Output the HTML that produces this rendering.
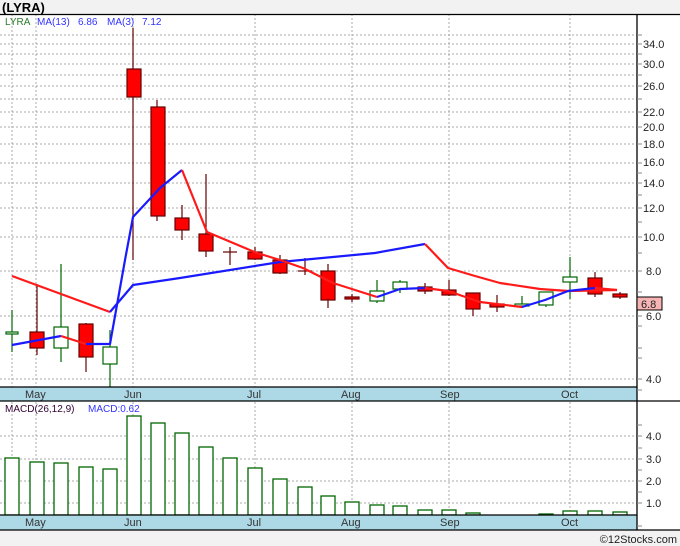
<!DOCTYPE html>
<html><head><meta charset="utf-8"><style>
html,body{margin:0;padding:0;background:#f2f2f2;}
svg{display:block;font-family:"Liberation Sans","DejaVu Sans",sans-serif;}
</style></head><body>
<svg width="680" height="546" viewBox="0 0 680 546" xmlns="http://www.w3.org/2000/svg">
<rect x="0" y="0" width="680" height="546" fill="#f2f2f2"/>
<text x="2" y="12" font-size="13" font-weight="bold" fill="#000">(LYRA)</text>
<rect x="0" y="14" width="680" height="516" fill="#fff"/>
<g stroke="#aaa" stroke-width="1" stroke-dasharray="2,2">
<line x1="0" y1="35" x2="637" y2="35"/><line x1="0" y1="44" x2="637" y2="44"/><line x1="0" y1="54" x2="637" y2="54"/><line x1="0" y1="64" x2="637" y2="64"/><line x1="0" y1="75" x2="637" y2="75"/><line x1="0" y1="86" x2="637" y2="86"/><line x1="0" y1="99" x2="637" y2="99"/><line x1="0" y1="112" x2="637" y2="112"/><line x1="0" y1="127" x2="637" y2="127"/><line x1="0" y1="144" x2="637" y2="144"/><line x1="0" y1="163" x2="637" y2="163"/><line x1="0" y1="183" x2="637" y2="183"/><line x1="0" y1="208" x2="637" y2="208"/><line x1="0" y1="237" x2="637" y2="237"/><line x1="0" y1="271" x2="637" y2="271"/><line x1="0" y1="316" x2="637" y2="316"/><line x1="0" y1="379" x2="637" y2="379"/>
<line x1="0" y1="436" x2="637" y2="436"/><line x1="0" y1="459" x2="637" y2="459"/><line x1="0" y1="481" x2="637" y2="481"/><line x1="0" y1="503" x2="637" y2="503"/>
<line x1="12" y1="14" x2="12" y2="515"/><line x1="36" y1="14" x2="36" y2="515"/><line x1="133" y1="14" x2="133" y2="515"/><line x1="255" y1="14" x2="255" y2="515"/><line x1="352" y1="14" x2="352" y2="515"/><line x1="449" y1="14" x2="449" y2="515"/><line x1="570" y1="14" x2="570" y2="515"/>
</g>
<text x="5" y="25" font-size="10" fill="#2a7a2a">LYRA</text>
<g font-size="10" fill="#3333ff">
<text x="37" y="25">MA(13)</text><text x="78" y="25">6.86</text><text x="107" y="25">MA(3)</text><text x="142" y="25">7.12</text>
</g>
<!-- candles -->
<g stroke-width="1.2">
<g stroke="#006600" fill="#fff">
<line x1="12" y1="310" x2="12" y2="352"/><rect x="6" y="332" width="12" height="2"/>
<line x1="61" y1="264" x2="61" y2="362"/><rect x="54" y="327" width="14" height="21"/>
<line x1="110" y1="330" x2="110" y2="388"/><rect x="103" y="347" width="14" height="17"/>
<line x1="377" y1="280" x2="377" y2="303"/><rect x="370" y="291" width="14" height="10"/>
<line x1="400" y1="280" x2="400" y2="293"/><rect x="393" y="282" width="14" height="7"/>
<line x1="522" y1="296" x2="522" y2="308"/><rect x="515" y="304" width="14" height="2"/>
<line x1="546" y1="292" x2="546" y2="307"/><rect x="539" y="292" width="14" height="13"/>
<line x1="570" y1="257" x2="570" y2="299"/><rect x="563" y="277" width="14" height="5"/>
</g>
<g stroke="#660000" fill="#ff0000">
<line x1="37" y1="284" x2="37" y2="355"/><rect x="30" y="332" width="14" height="16"/>
<line x1="86" y1="323" x2="86" y2="372"/><rect x="79" y="324" width="14" height="33"/>
<line x1="133" y1="28" x2="133" y2="260"/><rect x="127" y="69" width="14" height="28"/>
<line x1="157" y1="100" x2="157" y2="221"/><rect x="151" y="107" width="14" height="109"/>
<line x1="182" y1="205" x2="182" y2="240"/><rect x="175" y="218" width="14" height="12"/>
<line x1="206" y1="174" x2="206" y2="257"/><rect x="199" y="234" width="14" height="17"/>
<line x1="230" y1="247" x2="230" y2="265"/><line x1="223" y1="252" x2="237" y2="252"/>
<line x1="255" y1="247" x2="255" y2="260"/><rect x="248" y="252" width="14" height="7"/>
<line x1="280" y1="255" x2="280" y2="274"/><rect x="273" y="260" width="14" height="13"/>
<line x1="305" y1="258" x2="305" y2="275"/><line x1="298" y1="271" x2="312" y2="271"/>
<line x1="328" y1="264" x2="328" y2="308"/><rect x="321" y="271" width="14" height="29"/>
<line x1="352" y1="294" x2="352" y2="302"/><rect x="345" y="297" width="14" height="2"/>
<line x1="425" y1="283" x2="425" y2="294"/><rect x="418" y="287" width="14" height="4"/>
<line x1="449" y1="280" x2="449" y2="296"/><rect x="442" y="290" width="14" height="5"/>
<line x1="473" y1="293" x2="473" y2="316"/><rect x="466" y="293" width="14" height="16"/>
<line x1="497" y1="295" x2="497" y2="312"/><rect x="490" y="304" width="14" height="3"/>
<line x1="595" y1="272" x2="595" y2="297"/><rect x="588" y="278" width="14" height="16"/>
<line x1="620" y1="292" x2="620" y2="299"/><rect x="613" y="294" width="14" height="3"/>
</g>
</g>
<!-- MA lines -->
<g fill="none" stroke-width="2.2" stroke-linejoin="round">
<polyline stroke="#ff1a1a" points="12,276 110,312"/>
<polyline stroke="#1a1aff" points="110,312 133,285 180,278 280,262 375,253 425,244"/>
<polyline stroke="#ff1a1a" points="425,244 448,268 475,276 500,283 540,289 568,291 617,290"/>
<polyline stroke="#1a1aff" points="12,345 61,336"/>
<polyline stroke="#ff1a1a" points="61,336 86,344"/>
<polyline stroke="#1a1aff" points="86,344 110,344 125,260 133,217 160,188 182,170"/>
<polyline stroke="#ff1a1a" points="182,170 207,232 257,253 280,260 303,268 333,283 377,297"/>
<polyline stroke="#1a1aff" points="377,297 400,289 425,288"/>
<polyline stroke="#ff1a1a" points="425,288 448,291 480,302 522,307"/>
<polyline stroke="#1a1aff" points="522,307 545,300 568,291 595,288"/>
<polyline stroke="#ff1a1a" points="595,288 617,290"/>
</g>
<!-- MACD bars -->
<g stroke="#006600" stroke-width="1.3" fill="#fff">
<rect x="5" y="458" width="14" height="57"/><rect x="30" y="462" width="14" height="53"/><rect x="54" y="463" width="14" height="52"/><rect x="79" y="467" width="14" height="48"/><rect x="103" y="469" width="14" height="46"/>
<rect x="127" y="416" width="14" height="99"/><rect x="151" y="423" width="14" height="92"/><rect x="175" y="433" width="14" height="82"/><rect x="199" y="447" width="14" height="68"/><rect x="223" y="458" width="14" height="57"/>
<rect x="248" y="468" width="14" height="47"/><rect x="273" y="479" width="14" height="36"/><rect x="298" y="487" width="14" height="28"/><rect x="321" y="496" width="14" height="19"/><rect x="345" y="502" width="14" height="13"/>
<rect x="370" y="505" width="14" height="10"/><rect x="393" y="506" width="14" height="9"/><rect x="418" y="510" width="14" height="5"/><rect x="442" y="510" width="14" height="5"/><rect x="466" y="513" width="14" height="2"/>
<rect x="539" y="514" width="14" height="1"/><rect x="563" y="511" width="14" height="4"/><rect x="588" y="511" width="14" height="4"/><rect x="613" y="512" width="14" height="3"/>
</g>
<text x="5" y="412" font-size="10" fill="#330033">MACD(26,12,9)</text>
<text x="88" y="412" font-size="10" fill="#3333ff">MACD:0.62</text>
<!-- bands -->
<rect x="0" y="387" width="637" height="14" fill="#add8e6"/>
<rect x="0" y="515" width="637" height="15" fill="#add8e6"/>
<g font-size="11" fill="#333">
<text x="25" y="398">May</text><text x="124" y="398">Jun</text><text x="247" y="398">Jul</text><text x="341" y="398">Aug</text><text x="440" y="398">Sep</text><text x="561" y="398">Oct</text>
<text x="25" y="526">May</text><text x="124" y="526">Jun</text><text x="247" y="526">Jul</text><text x="341" y="526">Aug</text><text x="440" y="526">Sep</text><text x="561" y="526">Oct</text>
</g>
<g stroke="#000" stroke-width="1.3">
<line x1="0" y1="14.5" x2="680" y2="14.5"/>
<line x1="0" y1="387" x2="637" y2="387"/>
<line x1="0" y1="401" x2="680" y2="401"/>
<line x1="0" y1="515" x2="637" y2="515"/>
<line x1="0" y1="530" x2="680" y2="530"/>
<line x1="637" y1="14" x2="637" y2="530"/>
</g>
<g stroke="#888" stroke-width="1">
<line x1="637" y1="35" x2="642" y2="35"/><line x1="637" y1="44" x2="642" y2="44"/><line x1="637" y1="54" x2="642" y2="54"/><line x1="637" y1="64" x2="642" y2="64"/><line x1="637" y1="75" x2="642" y2="75"/><line x1="637" y1="86" x2="642" y2="86"/><line x1="637" y1="99" x2="642" y2="99"/><line x1="637" y1="112" x2="642" y2="112"/><line x1="637" y1="127" x2="642" y2="127"/><line x1="637" y1="144" x2="642" y2="144"/><line x1="637" y1="163" x2="642" y2="163"/><line x1="637" y1="173" x2="642" y2="173"/><line x1="637" y1="183" x2="642" y2="183"/><line x1="637" y1="195" x2="642" y2="195"/><line x1="637" y1="208" x2="642" y2="208"/><line x1="637" y1="222" x2="642" y2="222"/><line x1="637" y1="237" x2="642" y2="237"/><line x1="637" y1="253" x2="642" y2="253"/><line x1="637" y1="271" x2="642" y2="271"/><line x1="637" y1="292" x2="642" y2="292"/><line x1="637" y1="316" x2="642" y2="316"/><line x1="637" y1="326" x2="642" y2="326"/><line x1="637" y1="348" x2="642" y2="348"/><line x1="637" y1="358" x2="642" y2="358"/><line x1="637" y1="379" x2="642" y2="379"/><line x1="637" y1="390" x2="642" y2="390"/>
<line x1="637" y1="425" x2="642" y2="425"/><line x1="637" y1="436" x2="642" y2="436"/><line x1="637" y1="448" x2="642" y2="448"/><line x1="637" y1="459" x2="642" y2="459"/><line x1="637" y1="470" x2="642" y2="470"/><line x1="637" y1="481" x2="642" y2="481"/><line x1="637" y1="492" x2="642" y2="492"/><line x1="637" y1="503" x2="642" y2="503"/><line x1="637" y1="526" x2="642" y2="526"/>
</g>
<g font-size="11" fill="#222">
<text x="643" y="48">34.0</text><text x="643" y="68">30.0</text><text x="643" y="90">26.0</text><text x="643" y="116">22.0</text><text x="643" y="131">20.0</text><text x="643" y="148">18.0</text><text x="643" y="166">16.0</text><text x="643" y="187">14.0</text><text x="643" y="212">12.0</text><text x="643" y="241">10.0</text><text x="646" y="275">8.0</text><text x="646" y="320">6.0</text><text x="646" y="383">4.0</text>
<text x="646" y="440">4.0</text><text x="646" y="463">3.0</text><text x="646" y="485">2.0</text><text x="646" y="507">1.0</text>
</g>
<rect x="637" y="297" width="25" height="13" fill="#f7b4b4" stroke="#000" stroke-width="1"/>
<text x="641" y="308" font-size="11" fill="#222">6.8</text>
<text x="677" y="543" font-size="11" fill="#222" text-anchor="end">©12Stocks.com</text>
</svg>
</body></html>
